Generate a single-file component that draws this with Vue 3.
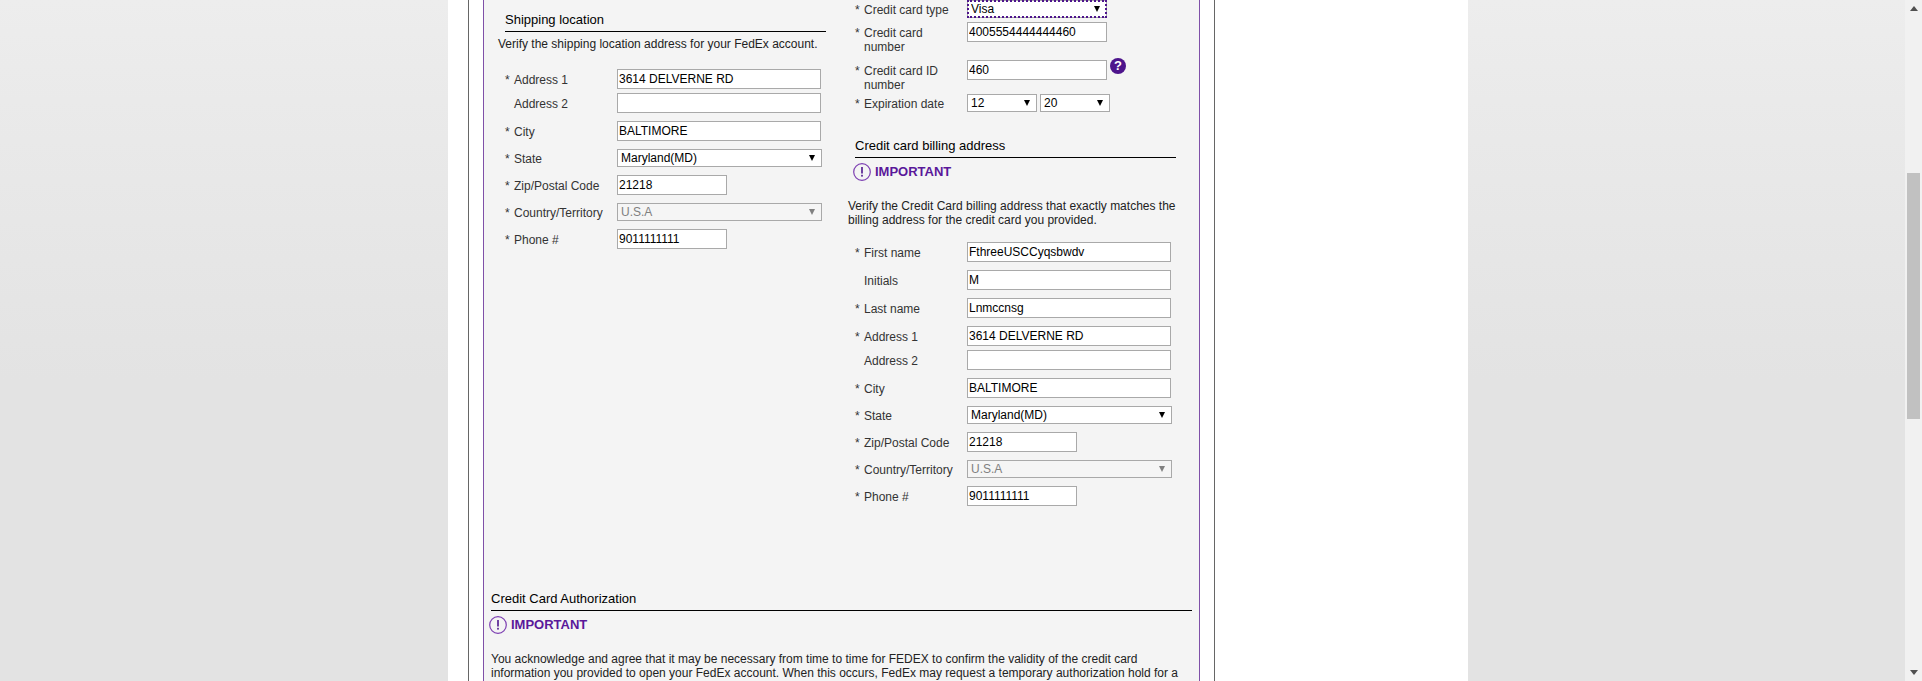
<script setup>
const shipping = [
  { label: 'Address 1', required: true, value: '3614 DELVERNE RD', tight: true },
  { label: 'Address 2', value: '' },
  { label: 'City', required: true, value: 'BALTIMORE' },
  { label: 'State', required: true, value: 'Maryland(MD)', select: true },
  { label: 'Zip/Postal Code', required: true, value: '21218', short: true },
  { label: 'Country/Territory', required: true, value: 'U.S.A', select: true, disabled: true },
  { label: 'Phone #', required: true, value: '9011111111', short: true },
]

const billing = [
  { label: 'First name', required: true, value: 'FthreeUSCCyqsbwdv' },
  { label: 'Initials', value: 'M' },
  { label: 'Last name', required: true, value: 'Lnmccnsg' },
  { label: 'Address 1', required: true, value: '3614 DELVERNE RD', tight: true },
  { label: 'Address 2', value: '' },
  { label: 'City', required: true, value: 'BALTIMORE' },
  { label: 'State', required: true, value: 'Maryland(MD)', select: true },
  { label: 'Zip/Postal Code', required: true, value: '21218', short: true },
  { label: 'Country/Territory', required: true, value: 'U.S.A', select: true, disabled: true },
  { label: 'Phone #', required: true, value: '9011111111', short: true },
]
</script>

<template>
  <div class="page">
    <div class="sheet">
      <div class="outer">
        <div class="panel">
          <div class="columns">
            <section class="col col-left">
              <h3 class="heading">Shipping location</h3>
              <p class="intro">Verify the shipping location address for your FedEx account.</p>
              <div class="fields">
                <div
                  v-for="row in shipping"
                  :key="row.label"
                  class="row"
                  :class="{ tight: row.tight }"
                >
                  <label class="lbl"><span class="star">{{ row.required ? '*' : '' }}</span>{{ row.label }}</label>
                  <div v-if="row.select" class="select-box" :class="{ off: row.disabled }">
                    <select :disabled="row.disabled"><option>{{ row.value }}</option></select>
                  </div>
                  <input v-else type="text" :value="row.value" :class="{ short: row.short }" />
                </div>
              </div>
            </section>

            <section class="col">
              <div class="row tight">
                <label class="lbl"><span class="star">*</span>Credit card type</label>
                <div class="select-box card-type focused">
                  <select><option>Visa</option></select>
                </div>
              </div>
              <div class="row tall tight">
                <label class="lbl"><span class="star">*</span>Credit card<br />number</label>
                <input type="text" class="card-input" value="4005554444444460" />
              </div>
              <div class="row tall flush">
                <label class="lbl"><span class="star">*</span>Credit card ID<br />number</label>
                <input type="text" class="card-input" value="460" />
                <span class="help">?</span>
              </div>
              <div class="row flush">
                <label class="lbl"><span class="star">*</span>Expiration date</label>
                <div class="select-box expiry"><select><option>12</option></select></div>
                <div class="select-box expiry"><select><option>20</option></select></div>
              </div>

              <h3 class="heading billing-heading">Credit card billing address</h3>
              <div class="important">
                <svg width="18" height="18" viewBox="0 0 18 18">
                  <circle cx="9" cy="9" r="8.3" fill="none" stroke="#7d3fb2" stroke-width="1.2" />
                  <path d="M9 4v6.4" stroke="#4d148c" stroke-width="1.6" fill="none" />
                  <rect x="8.2" y="11.8" width="1.6" height="1.8" fill="#4d148c" />
                </svg>
                <span>IMPORTANT</span>
              </div>
              <p class="intro billing-intro">Verify the Credit Card billing address that exactly matches the billing address for the credit card you provided.</p>
              <div class="fields billing-fields">
                <div
                  v-for="row in billing"
                  :key="row.label"
                  class="row"
                  :class="{ tight: row.tight }"
                >
                  <label class="lbl"><span class="star">{{ row.required ? '*' : '' }}</span>{{ row.label }}</label>
                  <div v-if="row.select" class="select-box" :class="{ off: row.disabled }">
                    <select :disabled="row.disabled"><option>{{ row.value }}</option></select>
                  </div>
                  <input v-else type="text" :value="row.value" :class="{ short: row.short }" />
                </div>
              </div>
            </section>
          </div>

          <section class="auth">
            <h3 class="heading auth-heading">Credit Card Authorization</h3>
            <div class="important">
              <svg width="18" height="18" viewBox="0 0 18 18">
                <circle cx="9" cy="9" r="8.3" fill="none" stroke="#7d3fb2" stroke-width="1.2" />
                <path d="M9 4v6.4" stroke="#4d148c" stroke-width="1.6" fill="none" />
                <rect x="8.2" y="11.8" width="1.6" height="1.8" fill="#4d148c" />
              </svg>
              <span>IMPORTANT</span>
            </div>
            <p class="auth-text">You acknowledge and agree that it may be necessary from time to time for FEDEX to confirm the validity of the credit card information you provided to open your FedEx account. When this occurs, FedEx may request a temporary authorization hold for a</p>
          </section>
        </div>
      </div>
    </div>

    <div class="scrollbar">
      <span class="arrow up"></span>
      <span class="thumb"></span>
      <span class="arrow down"></span>
    </div>
  </div>
</template>

<style>
html,
body {
  margin: 0;
  overflow: hidden;
}
</style>

<style scoped>
.page {
  display: flex;
  position: relative;
  height: 681px;
  overflow: hidden;
  padding-left: 448px;
  box-sizing: border-box;
  justify-content: space-between;
  background: linear-gradient(#ededed 0, #eaeaea 100px, #e3e3e3 380px, #e3e3e3 100%);
  font-family: 'Liberation Sans', Arial, sans-serif;
  font-size: 12px;
  line-height: 14px;
  color: #333;
}
.sheet {
  width: 1020px;
  background: #fff;
  padding-left: 20px;
  box-sizing: border-box;
}
.outer {
  width: 747px;
  height: 800px;
  box-sizing: border-box;
  border-left: 1px solid #666;
  border-right: 1px solid #666;
  padding: 0 14px;
}
.panel {
  height: 100%;
  box-sizing: border-box;
  border-left: 1px solid #7f50a8;
  border-right: 1px solid #7f50a8;
  background: #f4f4f4;
  padding-left: 14px;
}
.columns {
  display: flex;
}
.col {
  width: 350px;
}
.col-left {
  padding-top: 12px;
}
.heading {
  margin: 0 0 0 7px;
  width: 321px;
  padding-bottom: 3px;
  border-bottom: 1px solid #000;
  font-size: 13px;
  font-weight: 400;
  line-height: 16px;
  color: #000;
}
.intro {
  margin: 5px 0 0;
  color: #222;
}
.fields {
  margin-top: 18px;
}
.row {
  display: flex;
  align-items: center;
  margin: 0 0 8px 7px;
}
.row.tight {
  margin-bottom: 4px;
}
.row.flush {
  margin-bottom: 0;
}
.row.tall {
  align-items: flex-start;
  height: 34px;
}
.lbl {
  display: flex;
  flex: 0 0 112px;
  width: 112px;
  flex-wrap: wrap;
  padding-top: 2px;
  box-sizing: border-box;
}
.star {
  flex: 0 0 9px;
  width: 9px;
}
.row.tall .lbl {
  display: block;
  padding: 4px 0 0 9px;
}
.row.tall .star {
  display: inline-block;
  margin-left: -9px;
}
input {
  width: 204px;
  height: 20px;
  box-sizing: border-box;
  border: 1px solid #a9a9a9;
  padding: 0 1px;
  margin: 0;
  background: #fff;
  color: #000;
  font: 12px 'Liberation Sans', Arial, sans-serif;
  outline: none;
}
input.short {
  width: 110px;
}
input.card-input {
  width: 140px;
}
.select-box {
  position: relative;
  width: 205px;
  height: 18px;
}
select {
  appearance: none;
  display: block;
  width: 100%;
  height: 100%;
  box-sizing: border-box;
  border: 1px solid #a9a9a9;
  border-radius: 0;
  margin: 0;
  padding: 0 0 1px 3px;
  background: #fff;
  color: #000;
  font: 12px 'Liberation Sans', Arial, sans-serif;
  outline: none;
}
select:disabled {
  background: #f5f5f5;
  color: #808080;
  opacity: 1;
}
.select-box::after {
  content: '';
  position: absolute;
  right: 7px;
  top: 6px;
  border-left: 3px solid transparent;
  border-right: 3px solid transparent;
  border-top: 6px solid #000;
}
.select-box.off::after {
  border-top-color: #808080;
}
.select-box.card-type {
  width: 140px;
}
.select-box.focused select {
  outline: 2px dotted #4d148c;
  outline-offset: -2px;
}
.select-box.expiry {
  width: 70px;
  margin-right: 3px;
}
.help {
  display: flex;
  align-items: center;
  justify-content: center;
  width: 16px;
  height: 16px;
  margin: -2px 0 0 3px;
  border-radius: 50%;
  background: #4d148c;
  color: #fff;
  font-size: 13px;
  font-weight: 700;
  line-height: 16px;
}
.billing-heading {
  margin-top: 26px;
}
.important {
  display: flex;
  align-items: center;
  gap: 4px;
  margin: 6px 0 0 5px;
  height: 16px;
  color: #5a189a;
  font-size: 13px;
  font-weight: 700;
}
.important svg {
  flex: 0 0 18px;
}
.billing-intro {
  width: 332px;
  margin-top: 19px;
}
.billing-fields {
  margin-top: 15px;
}
.auth {
  margin: 77px 0 0 -7px;
  width: 701px;
}
.auth-heading {
  margin-left: 0;
  width: 100%;
}
.auth .important {
  margin-left: -2px;
}
.auth-text {
  margin: 19px 0 0;
  color: #222;
}
.scrollbar {
  position: relative;
  flex: 0 0 17px;
  width: 17px;
  background: #f1f1f1;
  display: flex;
  flex-direction: column;
  justify-content: space-between;
  align-items: center;
}
.thumb {
  position: absolute;
  left: 2px;
  top: 173px;
  width: 13px;
  height: 246px;
  background: #c1c1c1;
}
.arrow {
  width: 0;
  height: 0;
  border-left: 4px solid transparent;
  border-right: 4px solid transparent;
}
.arrow.up {
  margin-top: 6px;
  border-bottom: 5px solid #505050;
}
.arrow.down {
  margin-bottom: 6px;
  border-top: 5px solid #505050;
}
</style>
